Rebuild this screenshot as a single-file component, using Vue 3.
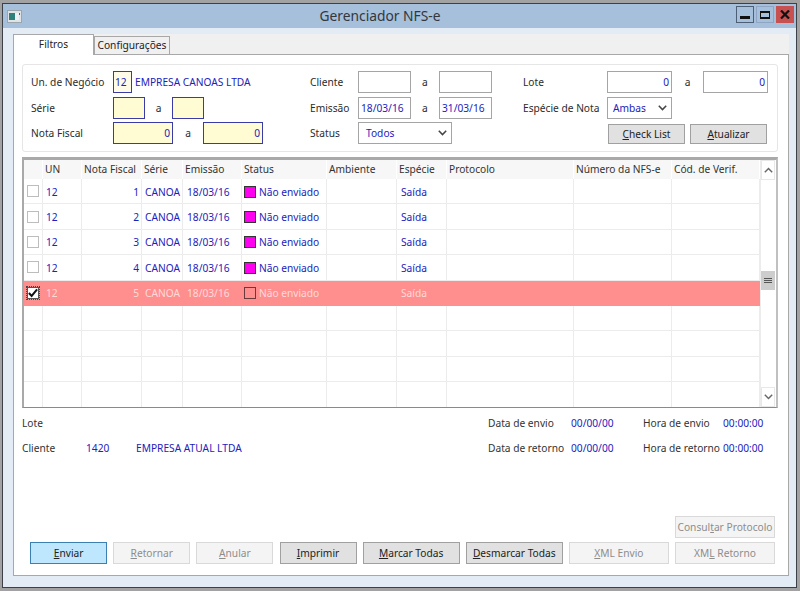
<script setup>
const rows = [
  { id: 1, checked: false },
  { id: 2, checked: false },
  { id: 3, checked: false },
  { id: 4, checked: false },
  { id: 5, checked: true },
  { id: 0 }, { id: -1 }, { id: -2 }, { id: -3 }
]
const headers = ['', 'UN', 'Nota Fiscal', 'Série', 'Emissão', 'Status', 'Ambiente', 'Espécie', 'Protocolo', 'Número da NFS-e', 'Cód. de Verif.']
const actions = [
  { pre: '', key: 'E', post: 'nviar', cls: 'primary' },
  { pre: '', key: 'R', post: 'etornar', cls: 'off' },
  { pre: '', key: 'A', post: 'nular', cls: 'off' },
  { pre: '', key: 'I', post: 'mprimir', cls: '' },
  { pre: '', key: 'M', post: 'arcar Todas', cls: 'wide' },
  { pre: '', key: 'D', post: 'esmarcar Todas', cls: 'wide' },
  { pre: '', key: 'X', post: 'ML Envio', cls: 'off xml' },
  { pre: 'XM', key: 'L', post: ' Retorno', cls: 'off xml' }
]
</script>

<template>
  <div class="window">
    <div class="titlebar">
      <svg class="appicon" width="15" height="13" viewBox="0 0 15 13">
        <rect x="0.5" y="0.5" width="14" height="12" fill="#dfe3e6" stroke="#9aa5ad" />
        <rect x="2" y="3" width="6" height="7" fill="#2f7f7a" />
        <rect x="8" y="3" width="4" height="7" fill="#eef1f3" />
        <rect x="12" y="3" width="1" height="2" fill="#55606a" />
      </svg>
      <div class="title">Gerenciador NFS-e</div>
      <div class="controls">
        <div class="ctl ctl-min"><span class="min-bar"></span></div>
        <div class="ctl"><span class="max-box"></span></div>
        <div class="ctl ctl-close">
          <svg width="10" height="9" viewBox="0 0 10 9">
            <path d="M1 0.5L9 8.5M9 0.5L1 8.5" stroke="#111" stroke-width="2.2" fill="none" />
          </svg>
        </div>
      </div>
    </div>

    <div class="client">
      <div class="tabs">
        <div class="tab active">Filtros</div>
        <div class="tab">Configurações</div>
      </div>

      <div class="panel">
        <div class="filters">
          <div class="fcol fcol1">
            <div class="frow">
              <label class="lbl1">Un. de Negócio</label>
              <div class="field req un">12</div>
              <span class="company">EMPRESA CANOAS LTDA</span>
            </div>
            <div class="frow">
              <label class="lbl1">Série</label>
              <div class="field req yellow serie"></div>
              <span class="sep sep-serie">a</span>
              <div class="field req yellow serie"></div>
            </div>
            <div class="frow">
              <label class="lbl1">Nota Fiscal</label>
              <div class="field req yellow nota num">0</div>
              <span class="sep sep-nota">a</span>
              <div class="field req yellow nota num">0</div>
            </div>
          </div>

          <div class="fcol fcol2">
            <div class="frow">
              <label class="lbl2">Cliente</label>
              <div class="field cli"></div>
              <span class="sep sep-cli">a</span>
              <div class="field cli"></div>
            </div>
            <div class="frow">
              <label class="lbl2">Emissão</label>
              <div class="field cli">18/03/16</div>
              <span class="sep sep-cli">a</span>
              <div class="field cli">31/03/16</div>
            </div>
            <div class="frow">
              <label class="lbl2">Status</label>
              <div class="field combo status">
                <span>Todos</span>
                <svg width="9" height="6" viewBox="0 0 9 6"><path d="M0.8 0.8L4.5 4.6L8.2 0.8" stroke="#444" stroke-width="1.5" fill="none" /></svg>
              </div>
            </div>
          </div>

          <div class="fcol">
            <div class="frow">
              <label class="lbl3">Lote</label>
              <div class="field lote num">0</div>
              <span class="sep sep-lote">a</span>
              <div class="field lote num">0</div>
            </div>
            <div class="frow">
              <label class="lbl3">Espécie de Nota</label>
              <div class="field combo especie">
                <span>Ambas</span>
                <svg width="9" height="6" viewBox="0 0 9 6"><path d="M0.8 0.8L4.5 4.6L8.2 0.8" stroke="#444" stroke-width="1.5" fill="none" /></svg>
              </div>
            </div>
            <div class="frow frow-btns">
              <button class="btn small"><u>C</u>heck List</button>
              <button class="btn small"><u>A</u>tualizar</button>
            </div>
          </div>
        </div>

        <div class="tablebox">
          <div class="grid">
            <div class="gridrow head">
              <div v-for="h in headers" :key="h" class="hcell">{{ h }}</div>
            </div>
            <div
              v-for="r in rows"
              :key="r.id"
              class="gridrow line"
              :class="{ selected: r.checked }"
            >
              <template v-if="r.id > 0">
                <div class="cell cellcheck">
                  <span class="focus" :class="{ on: r.checked }">
                    <span class="check" :class="{ on: r.checked }">
                      <svg v-if="r.checked" width="11" height="10" viewBox="0 0 11 10">
                        <path d="M1 5L4 8.2L10 1" stroke="#111" stroke-width="2.2" fill="none" />
                      </svg>
                    </span>
                  </span>
                </div>
                <div class="cell un-cell">12</div>
                <div class="cell right">{{ r.id }}</div>
                <div class="cell serie-cell">CANOA</div>
                <div class="cell">18/03/16</div>
                <div class="cell statuscell"><span class="flag"></span>Não enviado</div>
                <div class="cell"></div>
                <div class="cell">Saída</div>
                <div class="cell"></div>
                <div class="cell"></div>
                <div class="cell"></div>
              </template>
              <template v-else>
                <div v-for="n in 11" :key="n" class="cell"></div>
              </template>
            </div>
          </div>
          <div class="scrollbar">
            <div class="sbtn">
              <svg width="9" height="6" viewBox="0 0 9 6"><path d="M0.8 5.2L4.5 1.4L8.2 5.2" stroke="#666" stroke-width="1.4" fill="none" /></svg>
            </div>
            <div class="track-a"></div>
            <div class="thumb"><span></span><span></span><span></span></div>
            <div class="track-b"></div>
            <div class="sbtn">
              <svg width="9" height="6" viewBox="0 0 9 6"><path d="M0.8 0.8L4.5 4.6L8.2 0.8" stroke="#666" stroke-width="1.4" fill="none" /></svg>
            </div>
          </div>
        </div>

        <div class="info">
          <span>Lote</span><span></span><span></span>
          <span>Data de envio</span><span class="val">00/00/00</span>
          <span>Hora de envio</span><span class="val">00:00:00</span>
          <span>Cliente</span><span class="val">1420</span><span class="val">EMPRESA ATUAL LTDA</span>
          <span>Data de retorno</span><span class="val">00/00/00</span>
          <span>Hora de retorno</span><span class="val">00:00:00</span>
        </div>

        <div class="footer">
          <div class="protocol">
            <button class="btn off xml">Consul<u>t</u>ar Protocolo</button>
          </div>
          <div class="actions">
            <button
              v-for="a in actions"
              :key="a.key + a.post"
              class="btn"
              :class="a.cls"
            >{{ a.pre }}<u>{{ a.key }}</u>{{ a.post }}</button>
          </div>
        </div>
      </div>
    </div>
  </div>
</template>

<style>
html, body {
  margin: 0;
  height: 591px;
  overflow: hidden;
  background: #a2a2a2;
}
</style>

<style scoped>
.window {
  box-sizing: border-box;
  width: 795px;
  height: 585px;
  margin: 3px 0 0 2px;
  border: 1px solid #3c4148;
  background: #e3ebf5;
  display: flex;
  flex-direction: column;
  font-family: "Noto Sans", "Liberation Sans", sans-serif;
  font-size: 10.2px;
  color: #2b2b2b;
}
.titlebar {
  height: 24px;
  background: #a6bfdb;
  display: flex;
  align-items: center;
  position: relative;
  flex: none;
}
.appicon {
  margin-left: 4px;
}
.title {
  position: absolute;
  left: 0;
  right: 0;
  top: 2px;
  text-align: center;
  font-size: 13.8px;
  line-height: 20px;
  color: #33373c;
  padding-right: 39px;
}
.controls {
  margin-left: auto;
  margin-right: 2px;
  margin-top: -3px;
  display: flex;
  gap: 2px;
  position: relative;
}
.ctl {
  box-sizing: border-box;
  width: 18px;
  height: 17px;
  border: 1px solid #8ea6c2;
  display: flex;
  align-items: center;
  justify-content: center;
}
.ctl-min {
  border-color: #4d5f75;
}
.ctl-close {
  background: #c75050;
  border-color: #c75050;
}
.min-bar {
  width: 10px;
  height: 3px;
  margin-top: 5px;
  background: #111;
}
.max-box {
  box-sizing: border-box;
  width: 10px;
  height: 8px;
  border: 1px solid #111;
  border-top-width: 2px;
  border-bottom-width: 2px;
}
.client {
  flex: 1;
  margin: 6px 7px 11px 10px;
  display: flex;
  flex-direction: column;
  min-height: 0;
}
.tabs {
  height: 20px;
  flex: none;
  background: #f0f0f0;
  display: flex;
  align-items: flex-end;
  position: relative;
}
.tab {
  box-sizing: border-box;
  height: 18px;
  width: 76px;
  background: #f0f0f0;
  border: 1px solid #a8a8a8;
  border-bottom: none;
  text-align: center;
  line-height: 17px;
  color: #222;
}
.tab.active {
  width: 81px;
  height: 21px;
  margin-bottom: -1px;
  background: #fff;
  position: relative;
  z-index: 1;
  line-height: 18px;
}
.panel {
  flex: 1;
  box-sizing: border-box;
  background: #fff;
  border: 1px solid #a8a8a8;
  padding: 9px 10px 11px 8px;
  display: flex;
  flex-direction: column;
  min-height: 0;
}
.filters {
  box-sizing: border-box;
  height: 88px;
  flex: none;
  border: 1px solid #e6e6e6;
  border-radius: 3px;
  padding: 6px 0 0 8px;
  display: flex;
}
.fcol {
  display: flex;
  flex-direction: column;
  gap: 3.5px;
}
.fcol1 {
  width: 279px;
  flex: none;
}
.fcol2 {
  width: 213px;
  flex: none;
}
.frow {
  height: 22px;
  display: flex;
  align-items: center;
}
.lbl1 {
  width: 82px;
}
.lbl2 {
  width: 48px;
}
.lbl3 {
  width: 84px;
}
.field {
  box-sizing: border-box;
  height: 22px;
  border: 1px solid #a5a5a5;
  background: #fff;
  color: #2222bb;
  line-height: 20px;
  padding: 0 2px;
  white-space: nowrap;
}
.req {
  border-color: #3b3ba8;
}
.yellow {
  background: #fffbd2;
}
.num {
  text-align: right;
}
.un {
  width: 19px;
  background: #fffbe6;
  padding: 0 1px;
}
.company {
  margin-left: 3px;
  color: #2222bb;
}
.serie {
  width: 32px;
}
.nota {
  width: 60px;
}
.cli {
  width: 52.5px;
}
.lote {
  width: 65px;
}
.sep {
  text-align: center;
}
.sep-serie {
  width: 27px;
}
.sep-nota {
  width: 30px;
}
.sep-cli {
  width: 28.5px;
}
.sep-lote {
  width: 31px;
}
.combo {
  display: flex;
  align-items: center;
  justify-content: space-between;
  padding: 0 4px 0 5px;
}
.status {
  width: 94px;
  padding-left: 7px;
}
.especie {
  width: 65px;
}
.frow-btns {
  gap: 5px;
  padding-left: 84px;
}
.btn {
  box-sizing: border-box;
  width: 77px;
  height: 22px;
  padding: 0;
  background: #e1e1e1;
  border: 1px solid #a0a0a0;
  font: inherit;
  color: #222;
  white-space: nowrap;
}
.small {
  height: 20px;
  margin-top: 1px;
}
.small:first-child {
  margin-left: 1px;
}
.btn u {
  text-decoration-thickness: 1px;
}
.primary {
  background: #bee6fd;
  border-color: #3c7fb1;
}
.off {
  background: #f4f4f4;
  border-color: #d9d9d9;
  color: #8d8d8d;
}
.wide {
  width: 97px;
}
.xml {
  width: 100px;
}
.tablebox {
  box-sizing: border-box;
  height: 251px;
  flex: none;
  margin-top: 5px;
  border: 2px solid #a9a9a9;
  border-top-width: 3px;
  border-bottom: 1px solid #8a8a8a;
  border-right-color: #c0c0c0;
  display: flex;
}
.grid {
  width: 736px;
  flex: none;
  overflow: hidden;
}
.gridrow {
  display: grid;
  grid-template-columns: 19px 39px 60px 41px 59px 85px 70px 50px 127px 98px 88px;
}
.head {
  height: 19px;
}
.hcell {
  background: #f7f7f7;
  border-right: 1px solid #fff;
  padding-left: 2px;
  line-height: 18px;
  white-space: nowrap;
  overflow: hidden;
  color: #333;
}
.line {
  height: 25.4px;
  box-sizing: border-box;
  border-bottom: 1px solid #ececec;
}
.cell {
  box-sizing: border-box;
  border-right: 1px solid #ececec;
  color: #2222bb;
  padding: 1px 4px 0;
  white-space: nowrap;
  overflow: hidden;
  display: flex;
  align-items: center;
}
.un-cell {
  padding-left: 3px;
}
.right {
  justify-content: flex-end;
  padding-right: 2px;
}
.serie-cell {
  padding: 1px 0 0 3px;
}
.statuscell {
  padding-left: 2px;
}
.flag {
  box-sizing: border-box;
  width: 12px;
  height: 12px;
  flex: none;
  margin-right: 3px;
  background: #ff00f0;
  border: 1px solid #333;
}
.cellcheck {
  padding: 0;
  justify-content: center;
}
.focus {
  display: flex;
  padding: 1px;
  border: 1px solid transparent;
}
.focus.on {
  border: 1px dotted #444;
  padding: 0;
}
.check {
  box-sizing: border-box;
  width: 12px;
  height: 12px;
  background: #fff;
  border: 1px solid #bdbdbd;
  display: flex;
  align-items: center;
  justify-content: center;
}
.check.on {
  border-color: #555;
}
.selected {
  background: #ff8f8f;
  border-bottom-color: #ff8f8f;
}
.selected .cell {
  color: #ffd9d9;
  border-right-color: #ff8f8f;
}
.selected .flag {
  background: transparent;
  border-color: #6b3a3a;
}
.scrollbar {
  flex: 1;
  display: flex;
  flex-direction: column;
  background: #fff;
  padding-right: 1px;
  border-left: 1px solid #ececec;
}
.sbtn {
  height: 18px;
  flex: none;
  border: 1px solid #e8e8e8;
  display: flex;
  align-items: center;
  justify-content: center;
}
.track-a {
  height: 91px;
  flex: none;
}
.track-b {
  flex: 1;
}
.thumb {
  box-sizing: border-box;
  height: 19px;
  flex: none;
  background: #cdcdcd;
  display: flex;
  flex-direction: column;
  align-items: center;
  justify-content: center;
  gap: 1px;
}
.thumb span {
  width: 8px;
  height: 1px;
  background: #555;
}
.info {
  margin-top: 2px;
  display: grid;
  grid-template-columns: 64px 50px 352px 83px 72px 80px 1fr;
  grid-auto-rows: 25.4px;
  align-items: center;
  color: #333;
}
.val {
  color: #2222bb;
}
.footer {
  margin-top: auto;
  margin-right: 3px;
  display: flex;
  flex-direction: column;
  gap: 4px;
}
.protocol {
  display: flex;
  justify-content: flex-end;
}
.actions {
  display: flex;
  gap: 6.14px;
  justify-content: flex-end;
}
</style>
